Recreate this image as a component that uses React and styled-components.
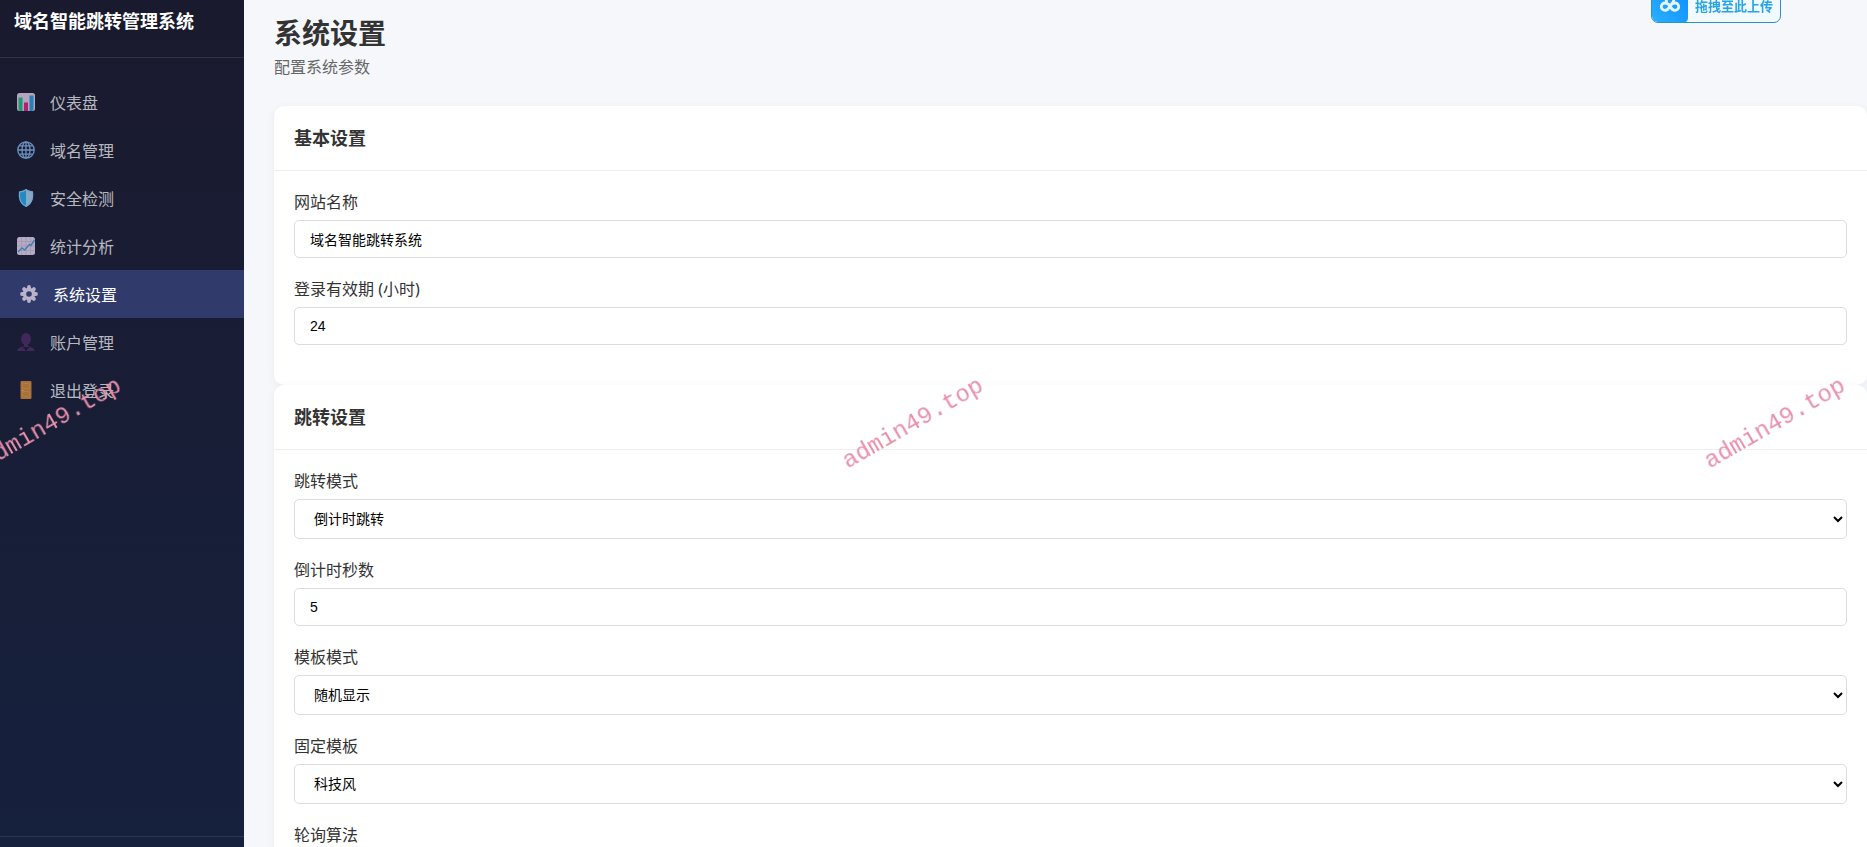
import React, { useState } from 'react';
import styled, { createGlobalStyle } from 'styled-components';

const menu = [
  { icon: 'dashboard', label: '仪表盘' },
  { icon: 'globe', label: '域名管理' },
  { icon: 'shield', label: '安全检测' },
  { icon: 'trend', label: '统计分析' },
  { icon: 'gear', label: '系统设置', active: true },
  { icon: 'user', label: '账户管理' },
  { icon: 'door', label: '退出登录' },
];

const icons = {
  dashboard: (
    <>
      <rect x="0" y="0" width="18" height="18" rx="2.500" fill="#b3a5c0" />
      <path d="M1.500 4.500h4V18h-2a2 2 0 01-2-2z" fill="#1f9a6c" />
      <rect x="7" y="9.500" width="4" height="8.500" fill="#b3206f" />
      <path d="M12.500 2.500h4V16a2 2 0 01-2 2h-2z" fill="#2580b8" />
    </>
  ),
  globe: (
    <g fill="none" stroke="#6d93bd" strokeWidth="1.3">
      <circle cx="9" cy="9" r="8.2" />
      <ellipse cx="9" cy="9" rx="4" ry="8.2" />
      <path d="M9 1v16M1 9h16M2.400 4.800h13.200M2.400 13.200h13.200" />
    </g>
  ),
  shield: (
    <>
      <path d="M9 0C7 1.600 4.500 2 2 2.500 1 9 3 15.500 9 18z" fill="#2488c2" />
      <path d="M9 0c2 1.600 4.500 2 7 2.500C17 9 15 15.500 9 18z" fill="#86a9c6" />
      <path d="M9 .8C7 2.200 4.800 2.700 2.600 3.100 1.800 9 3.500 14.700 9 17.200 14.500 14.700 16.200 9 15.400 3.100 13.200 2.700 11 2.200 9 .8z" fill="none" stroke="#73a5c8" strokeWidth="1.200" />
    </>
  ),
  trend: (
    <>
      <rect x="0" y="0" width="18" height="18" rx="2.500" fill="#b5abc3" />
      <path d="M4.500 0v18M9 0v18M13.500 0v18M0 4.500h18M0 9h18M0 13.500h18" stroke="#a294b4" strokeWidth=".7" />
      <path d="M1 15l4-4 2.500 2 5-5.500 1.500 1L17.500 3" fill="none" stroke="#427fae" strokeWidth="1.4" />
    </>
  ),
  gear: (
    <>
      <g stroke="#b9b2ca" strokeWidth="3.800" strokeLinecap="round">
        <path d="M9 2v14M2 9h14M4.100 4.100l9.800 9.800M13.900 4.100l-9.800 9.800" />
      </g>
      <circle cx="9" cy="9" r="6.200" fill="#b9b2ca" />
      <circle cx="9" cy="9" r="2.800" fill="#303b6b" />
    </>
  ),
  user: (
    <g fill="#42285a">
      <ellipse cx="9" cy="6" rx="5" ry="6" />
      <path d="M7 10h4v3l5 2c1 .5 1.500 1.500 1.500 3H.500c0-1.500.5-2.500 1.500-3l5-2z" />
      <path d="M5.500 14L9 18l3.500-4" fill="#191d33" />
    </g>
  ),
  door: (
    <>
      <rect x="3.500" y="0" width="11" height="18" rx="1" fill="#a9713a" />
      <path d="M5.500 2.500h7v5h-7zM5.500 10.500h7v5h-7z" fill="none" stroke="#b88147" strokeWidth=".7" />
      <circle cx="5.500" cy="9.500" r=".8" fill="#c9a05a" />
    </>
  ),
};

const basicFields = [
  { id: 'site_name', label: '网站名称', value: '域名智能跳转系统' },
  { id: 'login_hours', label: '登录有效期 (小时)', value: '24' },
];

const jumpFields = [
  { id: 'jump_mode', label: '跳转模式', options: ['倒计时跳转', '直接跳转'] },
  { id: 'countdown', label: '倒计时秒数', value: '5' },
  { id: 'template_mode', label: '模板模式', options: ['随机显示', '固定显示'] },
  { id: 'template', label: '固定模板', options: ['科技风', '简约风'] },
  { id: 'algorithm', label: '轮询算法', options: ['随机', '顺序'] },
];

const Field = ({ field }) => {
  const [value, setValue] = useState(field.options ? field.options[0] : field.value);
  const onChange = (e) => setValue(e.target.value);

  return (
    <FormGroup>
      <Label htmlFor={field.id}>{field.label}</Label>
      {field.options ? (
        <Select id={field.id} value={value} onChange={onChange}>
          {field.options.map((option) => (
            <option key={option} value={option}>{option}</option>
          ))}
        </Select>
      ) : (
        <Input id={field.id} type="text" value={value} onChange={onChange} />
      )}
    </FormGroup>
  );
};

const SettingsCard = ({ title, fields }) => (
  <Card>
    <CardHeader>
      <CardTitle>{title}</CardTitle>
    </CardHeader>
    <CardBody>
      {fields.map((field) => <Field key={field.id} field={field} />)}
    </CardBody>
  </Card>
);

const App = () => {
  return (
    <>
      <GlobalStyle />
      <Layout>
        <Sidebar>
          <Brand>域名智能跳转管理系统</Brand>
          <Nav>
            {menu.map((item) => (
              <NavLink key={item.label} href="#" $active={item.active}>
                <NavIcon viewBox="0 0 18 18" aria-hidden="true">{icons[item.icon]}</NavIcon>
                {item.label}
              </NavLink>
            ))}
          </Nav>
          <SidebarFooter />
        </Sidebar>
        <Main>
          <PageTitle>系统设置</PageTitle>
          <PageDesc>配置系统参数</PageDesc>
          <SettingsCard title="基本设置" fields={basicFields} />
          <SettingsCard title="跳转设置" fields={jumpFields} />
        </Main>
      </Layout>
      <UploadButton type="button">
        <UploadIcon>
          <svg width="22" height="22" viewBox="0 0 22 22" fill="none" stroke="#e6f6ff" strokeWidth="2.800" strokeLinecap="round" aria-hidden="true">
            <path d="M7.500 7a4 4 0 117 0" />
            <path d="M11 12c-1.500-2-3-3-5-3a3.700 3.700 0 100 7.400c2 0 3.500-1.400 5-4.400" />
            <path d="M14.500 7.500L11 12c1.500 3 3 4.400 5 4.400A3.700 3.700 0 1016 9c-2 0-3.500 1-5 3" />
          </svg>
        </UploadIcon>
        <UploadText>拖拽至此上传</UploadText>
      </UploadButton>
      <WatermarkLayer aria-hidden="true">
        <Watermark>admin49.top</Watermark>
        <Watermark>admin49.top</Watermark>
        <Watermark>admin49.top</Watermark>
      </WatermarkLayer>
    </>
  );
};

const GlobalStyle = createGlobalStyle`
  * {
    box-sizing: border-box;
    margin: 0;
    padding: 0;
  }

  body {
    font-family: "Noto Sans", "Noto Sans CJK SC", sans-serif;
    font-size: 16px;
    color: #333;
    background: #f5f7fa;
    overflow: hidden;
  }
`;

const Layout = styled.div`
  display: flex;
  height: 100vh;
  overflow: hidden;
`;

const Sidebar = styled.aside`
  display: flex;
  flex-direction: column;
  flex: 0 0 244px;
  color: #fff;
  background: linear-gradient(180deg, #1a1a2e 0%, #16213e 100%);
`;

const Brand = styled.div`
  padding: 9px 14px 24px;
  font-size: 18px;
  font-weight: 700;
  line-height: 24px;
  border-bottom: 1px solid rgba(255, 255, 255, 0.1);
`;

const Nav = styled.nav`
  flex: 1;
  padding: 20px 0;
`;

const NavLink = styled.a`
  display: flex;
  align-items: center;
  gap: 15px;
  height: 48px;
  padding: 0 17px;
  text-decoration: none;
  color: ${(props) => (props.$active ? '#fff' : 'rgba(255, 255, 255, 0.7)')};
  background: ${(props) => (props.$active ? '#303b6b' : 'transparent')};
  border-left: ${(props) => (props.$active ? '3px solid #303b6b' : 'none')};
`;

const NavIcon = styled.svg`
  width: 18px;
  height: 18px;
`;

const SidebarFooter = styled.div`
  height: 11px;
  border-top: 1px solid rgba(255, 255, 255, 0.1);
`;

const Main = styled.main`
  flex: 1;
  min-width: 0;
  padding: 16px 0 0 30px;
`;

const PageTitle = styled.h1`
  font-size: 28px;
  line-height: 34px;
`;

const PageDesc = styled.p`
  margin: 4px 0 26px;
  line-height: 26px;
  color: #666;
`;

const Card = styled.section`
  background: #fff;
  border-radius: 10px;
  box-shadow: 0 2px 10px rgba(0, 0, 0, 0.05);
`;

const CardHeader = styled.div`
  padding: 20px;
  border-bottom: 1px solid #eee;
`;

const CardTitle = styled.h2`
  font-size: 18px;
  line-height: 24px;
`;

const CardBody = styled.div`
  padding: 20px;
`;

const FormGroup = styled.div`
  margin-bottom: 20px;
`;

const Label = styled.label`
  display: block;
  margin-bottom: 6px;
  line-height: 23px;
`;

const Input = styled.input`
  display: block;
  width: 100%;
  height: 38px;
  padding: 0 15px;
  font: 14px "Liberation Sans", "Noto Sans CJK SC", sans-serif;
  color: #000;
  background: #fff;
  border: 1px solid #ddd;
  border-radius: 5px;
  outline: none;
`;

const Select = styled.select`
  display: block;
  width: 100%;
  height: 40px;
  padding: 0 15px;
  font: 14px "Liberation Sans", "Noto Sans CJK SC", sans-serif;
  color: #000;
  background: #fff;
  border: 1px solid #ddd;
  border-radius: 5px;
  outline: none;
`;

const UploadButton = styled.button`
  position: fixed;
  top: -13px;
  right: 86px;
  display: flex;
  align-items: center;
  height: 36px;
  background: #f2faff;
  border: 1px solid #2b93bd;
  border-radius: 7px;
  overflow: hidden;
  cursor: pointer;
`;

const UploadIcon = styled.span`
  display: flex;
  align-items: center;
  justify-content: center;
  width: 36px;
  height: 36px;
  border-radius: 0 0 5px 0;
  background: linear-gradient(45deg, #2bb0ff, #0a8cff);
`;

const UploadText = styled.span`
  padding: 0 7px;
  font-family: "Noto Sans CJK SC", sans-serif;
  font-size: 13px;
  font-weight: 700;
  color: #25a5e4;
`;

const WatermarkLayer = styled.div`
  position: fixed;
  top: 410px;
  left: -380px;
  display: grid;
  grid-template-columns: repeat(3, 862px);
  justify-items: center;
  pointer-events: none;
`;

const Watermark = styled.span`
  font-family: "Liberation Mono", monospace;
  font-size: 24px;
  line-height: 28px;
  color: #e88fab;
  transform: rotate(-30deg);
`;

export default App;
